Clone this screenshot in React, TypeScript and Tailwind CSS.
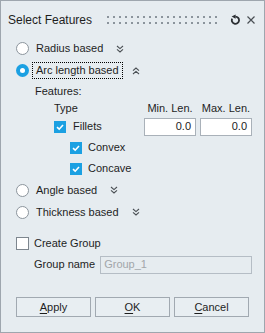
import React from 'react';

const font = { fontFamily: '"Liberation Sans", Arial, sans-serif' };

const Chevrons: React.FC<{ up?: boolean }> = ({ up }) => (
  <svg width="8" height="8" viewBox="0 0 8 8" className={up ? 'rotate-180' : ''}>
    <path d="M1 1 L4 3.6 L7 1 M1 4.4 L4 7 L7 4.4" fill="none" stroke="#4a4f54" strokeWidth="1.1" />
  </svg>
);

const Radio: React.FC<{ checked?: boolean }> = ({ checked }) =>
  checked ? (
    <span className="w-[13px] h-[13px] rounded-full bg-[#1ba0e2] flex items-center justify-center shrink-0">
      <span className="w-[5px] h-[5px] rounded-full bg-white" />
    </span>
  ) : (
    <span className="w-[13px] h-[13px] rounded-full bg-white border border-[#8c959d] shrink-0" />
  );

const Check: React.FC<{ checked?: boolean }> = ({ checked }) =>
  checked ? (
    <span className="w-[12px] h-[12px] bg-[#1ba0e2] flex items-center justify-center shrink-0">
      <svg width="10" height="10" viewBox="0 0 10 10">
        <path d="M2 5.2 L4.2 7.2 L8 3" fill="none" stroke="#fff" strokeWidth="1.6" />
      </svg>
    </span>
  ) : (
    <span className="w-[13px] h-[13px] bg-white border border-[#7d868e] shrink-0" />
  );

const RadioRow: React.FC<{ label: string; checked?: boolean; h: string }> = ({ label, checked, h }) => (
  <div className={`flex items-center pl-[15px] ${h}`}>
    <Radio checked={checked} />
    <span
      className={`ml-[3px] px-[3px] leading-[15px] border border-dotted ${
        checked ? 'border-black' : 'border-transparent'
      }`}
    >
      {label}
    </span>
    <span className="ml-[9px] flex items-center">
      <Chevrons up={checked} />
    </span>
  </div>
);

const Btn: React.FC<{ first: string; rest: string }> = ({ first, rest }) => (
  <button className="w-[75px] h-[20px] border border-[#a1a9b1] bg-[#e8eef2] text-[11px] text-[#1e1e1e] flex items-center justify-center">
    <span className="underline underline-offset-2">{first}</span>
    {rest}
  </button>
);

export default function App() {
  return (
    <div
      style={font}
      className="w-[265px] h-[333px] bg-[#e6ecf0] border border-[#9ea6ae] text-[11px] text-[#1e1e1e] flex flex-col"
    >
      {/* header */}
      <div className="h-[37px] flex items-center pl-[7px]">
        <span className="text-[12px]">Select Features</span>
        <div className="ml-[15px] grid grid-cols-[repeat(19,2px)] gap-x-[4px] gap-y-[4px]">
          {Array.from({ length: 38 }).map((_, i) => (
            <span key={i} className="w-[2px] h-[2px] bg-[#8b949c]" />
          ))}
        </div>
        <svg width="11" height="11" viewBox="0 0 11 11" className="ml-[13px]">
          <path d="M5.5 2.6 A3.6 3.6 0 1 1 2.2 4.6" fill="none" stroke="#2b2f33" strokeWidth="1.8" />
          <path d="M1.6 2.6 L5.6 0.4 L5.6 4.8 Z" fill="#2b2f33" />
        </svg>
        <svg width="10" height="10" viewBox="0 0 10 10" className="ml-[5px]">
          <path d="M1.5 1.5 L8.5 8.5 M8.5 1.5 L1.5 8.5" stroke="#4a4f54" strokeWidth="1.2" />
        </svg>
      </div>

      <RadioRow label="Radius based" h="h-[21px]" />
      <RadioRow label="Arc length based" checked h="h-[23px]" />

      <div className="h-[18px] flex items-center pl-[34px]">Features:</div>

      <div className="h-[16px] grid grid-cols-[86px_52px_52px] gap-x-[4px] items-center pl-[53px]">
        <span>Type</span>
        <span className="text-center">Min. Len.</span>
        <span className="text-center">Max. Len.</span>
      </div>

      <div className="h-[21px] grid grid-cols-[86px_52px_52px] gap-x-[4px] items-center pl-[53px]">
        <div className="flex items-center">
          <Check checked />
          <span className="ml-[7px]">Fillets</span>
        </div>
        <div className="h-[18px] bg-white border border-[#a9b1b9] flex items-center justify-end pr-[4px] text-[#222]">
          0.0
        </div>
        <div className="h-[18px] bg-white border border-[#a9b1b9] flex items-center justify-end pr-[4px] text-[#222]">
          0.0
        </div>
      </div>

      <div className="h-[21px] flex items-center pl-[69px]">
        <Check checked />
        <span className="ml-[6px]">Convex</span>
      </div>
      <div className="h-[21px] flex items-center pl-[69px]">
        <Check checked />
        <span className="ml-[6px]">Concave</span>
      </div>

      <RadioRow label="Angle based" h="h-[22px]" />
      <RadioRow label="Thickness based" h="h-[22px]" />

      <div className="h-[22px] mt-[9px] flex items-center pl-[15px]">
        <Check />
        <span className="ml-[5px]">Create Group</span>
      </div>

      <div className="h-[21px] flex items-center pl-[33px]">
        <span>Group name</span>
        <div className="ml-[5px] w-[152px] h-[18px] border border-[#b5bdc5] flex items-center pl-[3px] text-[#a2a6aa]">
          Group_1
        </div>
      </div>

      <div className="mt-[22px] flex gap-x-[4px] pl-[15px]">
        <Btn first="A" rest="pply" />
        <Btn first="O" rest="K" />
        <Btn first="C" rest="ancel" />
      </div>
    </div>
  );
}
